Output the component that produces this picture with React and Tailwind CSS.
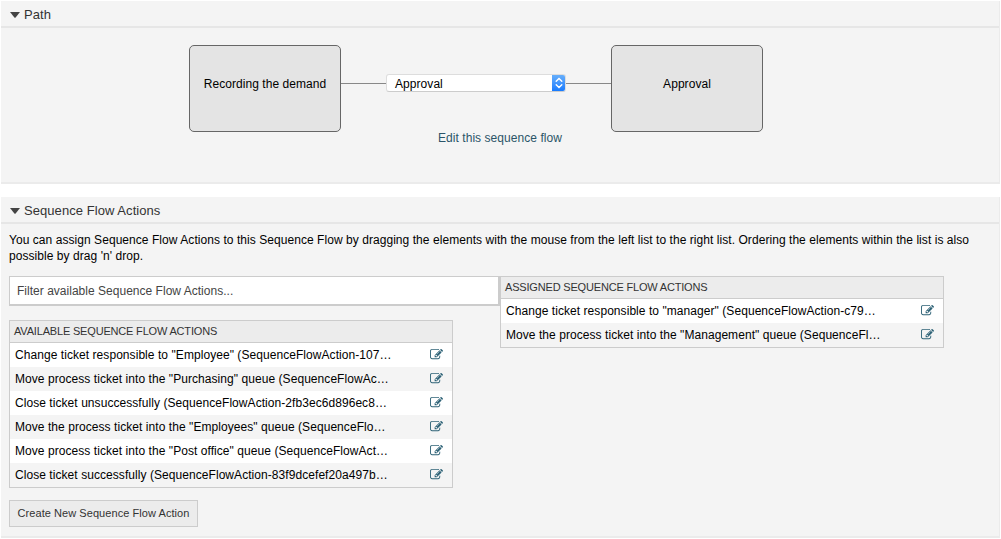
const available = [
  'Change ticket responsible to "Employee" (SequenceFlowAction-107…',
  'Move process ticket into the "Purchasing" queue (SequenceFlowAc…',
  'Close ticket unsuccessfully (SequenceFlowAction-2fb3ec6d896ec8…',
  'Move the process ticket into the "Employees" queue (SequenceFlo…',
  'Move process ticket into the "Post office" queue (SequenceFlowAct…',
  'Close ticket successfully (SequenceFlowAction-83f9dcefef20a497b…',
];

const assigned = [
  'Change ticket responsible to "manager" (SequenceFlowAction-c79…',
  'Move the process ticket into the "Management" queue (SequenceFl…',
];

function EditIcon() {
  return (
    <svg viewBox="0 0 1792 1792" className="mb-px size-[13px] shrink-0 fill-[#2f6377]">
      <path d="M888 1184l116-116-152-152-116 116v56h96v96h56zm440-720q-16-16-33 1l-350 350q-17 17-1 33t33-1l350-350q17-17 1-33zm80 594v190q0 119-84.5 203.5t-203.5 84.5h-832q-119 0-203.5-84.5t-84.5-203.5v-832q0-119 84.5-203.5t203.5-84.5h832q63 0 117 25 15 7 18 23 3 17-9 29l-49 49q-14 14-32 8-23-6-45-6h-832q-66 0-113 47t-47 113v832q0 66 47 113t113 47h832q66 0 113-47t47-113v-126q0-13 9-22l64-64q15-15 35-7t20 29zm-96-738l288 288-672 672h-288v-288zm444 132l-92 92-288-288 92-92q28-28 68-28t68 28l152 152q28 28 28 68t-28 68z" />
    </svg>
  );
}

function Panel({ title, className, children }) {
  return (
    <section className={`border-r border-b-2 border-[#ebebeb] bg-[#f4f4f4] ${className}`}>
      <header className="flex h-[27px] items-center gap-[4px] border-b-2 border-[#e6e6e6] pt-[2px] pl-[9px] text-[13px] text-[#333]">
        <svg viewBox="0 0 10 6" className="h-[6px] w-[10px] fill-[#444]">
          <path d="M0 0H10L5.6 5.4Q5 6 4.4 5.4Z" />
        </svg>
        <h2>{title}</h2>
      </header>
      {children}
    </section>
  );
}

function Node({ children }) {
  return (
    <div className="flex h-[87px] w-[152px] items-center justify-center rounded-[5px] border border-[#666] bg-[#e4e4e4] pb-[10px]">
      {children}
    </div>
  );
}

function ActionList({ title, items }) {
  return (
    <div className="w-[444px] border border-[#ccc]">
      <h3 className="h-[22px] border-b border-[#ccc] bg-[#ececec] pl-[4px] text-[11px] leading-[21px] tracking-[-0.18px] text-[#333]">
        {title}
      </h3>
      <ul>
        {items.map((item) => (
          <li
            key={item}
            className="flex h-[24px] items-center justify-between bg-white pr-[9px] pl-[5px] even:bg-[#f4f4f4]"
          >
            <span className="whitespace-nowrap">{item}</span>
            <EditIcon />
          </li>
        ))}
      </ul>
    </div>
  );
}

export default function App() {
  return (
    <main className="h-[539px] overflow-hidden bg-white pt-px pr-px pl-px font-['Liberation_Sans',Arial,sans-serif] text-[12px] leading-[16px] tracking-[0.06px] text-black">
      <Panel title="Path" className="h-[183px]">
        <div className="flex pt-[17px] pl-[188px]">
          <Node>Recording the demand</Node>
          <div className="flex w-[270px] flex-col items-center">
            <div className="flex w-full items-center pt-[29px]">
              <span className="h-px flex-1 bg-[#888]" />
              <div className="flex h-[18px] w-[180px] overflow-hidden rounded-[3px] border border-[#ddd] border-b-[#ccc] bg-white">
                <span className="flex-1 pl-[8px] leading-[18px]">Approval</span>
                <span className="-my-px -mr-px flex w-[14px] items-center justify-center bg-linear-to-b from-[#6ab1fa] to-[#0d77ff]">
                  <svg viewBox="0 0 8 12" className="h-[12px] w-[8px] fill-none stroke-white stroke-[1.4]">
                    <path d="M1.2 4.3L4 1.5L6.8 4.3M1.2 7.7L4 10.5L6.8 7.7" strokeLinecap="round" />
                  </svg>
                </span>
              </div>
              <span className="h-px flex-1 bg-[#888]" />
            </div>
            <a className="pt-[38px] pl-[48px] text-[#2b5468]">Edit this sequence flow</a>
          </div>
          <Node>Approval</Node>
        </div>
      </Panel>

      <Panel title="Sequence Flow Actions" className="mt-[13px] h-[341px]">
        <p className="pt-[8px] pl-[8px] tracking-[0.055px]">
          You can assign Sequence Flow Actions to this Sequence Flow by dragging the elements with the mouse from the left
          list to the right list. Ordering the elements within the list is also
          <br />
          possible by drag 'n' drop.
        </p>
        <div className="flex items-start pt-[12px] pl-[8px]">
          <div className="w-[491px]">
            <div className="h-[30px] border border-r-2 border-b-2 border-[#ccc] bg-white pl-[7px] leading-[29px] tracking-[0.02px] text-[#444]">
              Filter available Sequence Flow Actions...
            </div>
            <div className="pt-[14px]">
              <ActionList title="AVAILABLE SEQUENCE FLOW ACTIONS" items={available} />
            </div>
            <button className="mt-[12px] h-[27px] w-[189px] border border-[#ccc] bg-[#ececec] pb-[2px] text-[11px] text-[#333]">
              Create New Sequence Flow Action
            </button>
          </div>
          <ActionList title="ASSIGNED SEQUENCE FLOW ACTIONS" items={assigned} />
        </div>
      </Panel>
    </main>
  );
}
